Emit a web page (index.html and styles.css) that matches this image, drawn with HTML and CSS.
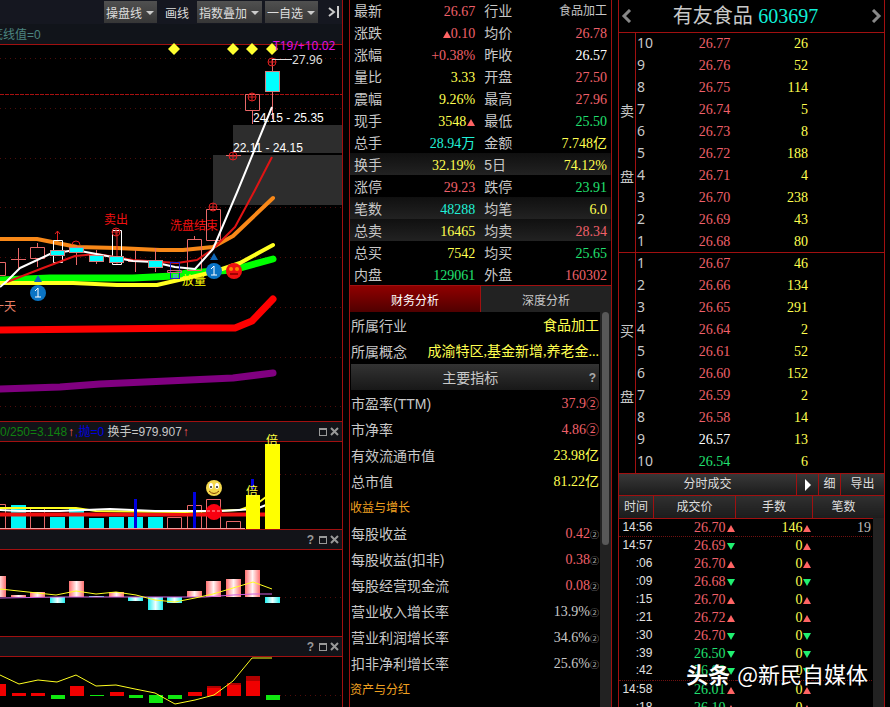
FILE: index.html
```html
<!DOCTYPE html>
<html lang="zh-CN">
<head>
    <meta charset="UTF-8">
    <meta name="viewport" content="width=device-width, initial-scale=1.0">
    <title>有友食品 603697</title>
    <link rel="stylesheet" href="styles.css">
</head>
<body>
    <main class="terminal">
        <!-- Charts -->
        <section class="charts">
            <div class="toolbar">
                <span class="drop"><select aria-label="操盘线"><option>操盘线</option></select></span>
                <button class="plain">画线</button>
                <span class="drop"><select aria-label="指数叠加"><option>指数叠加</option></select></span>
                <span class="drop"><select aria-label="自选"><option>一自选</option></select></span>
                <button class="collapse" aria-label="收起">
                    <svg width="12" height="14" viewBox="0 0 12 14"><path d="M1 3l5 4-5 4M10 1v12" fill="none" stroke="#ccc" stroke-width="2"/></svg>
                </button>
            </div>
            <div class="info">底线值=0</div>
            <svg class="plot" viewBox="0 45 342 376" id="kline">
                <defs>
                    <g id="mark" fill="none" stroke="#e02020"><circle r="4"/><path d="M-4 0h8M0-4v8"/></g>
                    <path id="diamond" d="M0-6l6 6-6 6-6-6z" fill="#ffff30"/>
                    <g id="face"><circle r="8" fill="#f01010"/><circle cx="-3" cy="-2" r="2" fill="#f80"/><circle cx="3" cy="-2" r="2" fill="#f80"/><path d="M-4 3h8" stroke="#a00000" stroke-width="2"/></g>
                    <g id="one"><path d="M0-18l4 7h-8z" fill="#1068b8"/><circle r="8" fill="#0a74c4"/><path d="M-3-2l3-3v9M-3 4h6" fill="none" stroke="#fff" stroke-width="1"/></g>
                </defs>
                <path class="grid" d="M0 58.5h342M0 108.5h342M0 158.5h342M0 207.5h342M0 257.5h342M0 307.5h342M0 357.5h342M0 406.5h342"/>
                <path d="M0 94.5h342" stroke="#a81010" stroke-dasharray="4 1"/>
                <path d="M233 125h109v28h-109zM213 155h129v50h-129z" fill="#2d2d2d"/>

                <polyline class="thick green" points="0,280 50,278 133,278 173,276 187,273 233,270 273,259"/>
                <polyline class="mid yellow" points="0,283 73,283 117,285 157,285 183,279 213,272 240,263 273,245"/>
                <polyline class="mid orange" points="0,239 37,239 57,243 77,247 117,248 160,250 183,250 213,247 233,236 273,198"/>
                <polyline class="thick red" points="0,330 195,328 235,328 252,321 273,299"/>
                <polyline class="thick purple" points="0,389 60,387 100,384 167,381 233,378 273,373"/>

                <g fill="none" stroke="#e86868">
                    <path d="M0 262.500h5.500v13h-5.500M11 259.500h15M18.500 248v20M30.500 247.500h14v11h-14zM37.500 243v4M37.500 259v8"/>
                    <path d="M76.500 245v20M96.500 250v14M128 261.500h15M135.500 250v22M155.500 248v24M187.500 239.500h14v31h-14zM194.500 236v3M206.500 209.500h14v31h-14z"/>
                    <path d="M226 155.500h15M245.500 94.500h14v16h-14zM252.500 111v13M272.500 59v60"/>
                </g>
                <path d="M53.500 240.500h9v22h-9zM112.500 230.500h9v34h-9z" fill="none" stroke="#fff"/>
                <path d="M57.500 231v9M55 234l2.500-3 2.500 3M117 231v33" fill="none" stroke="#e02020"/>
                <polyline class="thin redline" points="7,282 43,268 75,256 97,254 133,260 177,263 197,260 213,249 235,227 255,190 272,157"/>
                <polyline class="thin white" points="0,287 7,281 20,268 50,254 75,250 107,256 133,261 153,262 175,267 195,269 213,249 238,190 272,107"/>
                <g fill="#00ffff" stroke="#d08080">
                    <rect x="50.500" y="250.500" width="14" height="5"/>
                    <rect x="69.500" y="247.500" width="14" height="5"/>
                    <rect x="89.500" y="255.500" width="14" height="6"/>
                    <rect x="109.500" y="256.500" width="14" height="6"/>
                    <rect x="148.500" y="260.500" width="14" height="7"/>
                    <rect x="265.500" y="71.500" width="14" height="20"/>
                </g>
                <rect x="170.500" y="262.500" width="9" height="16" fill="none" stroke="#2020d0" stroke-width="1"/>
                <path d="M167.500 270.500h14v2h-14z" fill="none" stroke="#d06080"/>
                <rect x="173" y="274" width="5" height="4" fill="#40c0a0"/>

                <use href="#mark" x="272" y="62"/><use href="#mark" x="252" y="97"/>
                <use href="#mark" x="233" y="156"/><use href="#mark" x="213" y="207"/>
                <use href="#mark" x="116" y="232"/>
                <path d="M72 245a4 4 0 0 1 8 0" fill="none" stroke="#e02020"/>
                <use href="#diamond" x="174" y="49"/><use href="#diamond" x="233" y="49"/>
                <use href="#diamond" x="252" y="49"/><use href="#diamond" x="272" y="49"/>
                <path d="M272 59.500h20" stroke="#ddd"/>

                <text x="273" y="50" class="tahoma" fill="#e010e0">T19/+10.02</text>
                <text x="292" y="64" class="tahoma" fill="#ddd">27.96</text>
                <text x="253" y="122" fill="#fff">24.15 - 25.35</text>
                <text x="233" y="152" fill="#fff">22.11 - 24.15</text>
                <text x="104" y="224" fill="#f01010">卖出</text>
                <text x="170" y="230" fill="#f01010">洗盘结束</text>
                <text x="182" y="285" fill="#ffff00">放量</text>
                <text x="-8" y="311" fill="#e88068">一天</text>
                <use href="#one" x="38" y="293"/><use href="#one" x="214" y="271"/>
                <use href="#face" x="234" y="271"/>
            </svg>

            <div class="pane-head">
                <span class="vals"><span class="g">0/250=3.148</span><span class="up">↑</span><span class="b">,抛=0</span> <span>换手=979.907</span><span class="up">↑</span></span>
                <button aria-label="最大化"><i class="box"></i></button>
                <button aria-label="关闭"><svg width="9" height="9" viewBox="0 0 9 9"><path d="M1 1l7 7M8 1l-7 7" stroke="#999" stroke-width="2"/></svg></button>
            </div>
            <svg class="plot" viewBox="0 442 342 87">
                <path class="grid" d="M0 474.500h342"/>
                <path d="M11 505h15v23h-15zM50 517h15v11h-15zM69 509h15v19h-15zM89 518h15v10h-15zM109 517h15v11h-15zM128 517h15v11h-15zM148 517h15v11h-15z" fill="#00f4f4"/>
                <path d="M0 504.500h5.500v24M30.500 508.500h14v20h-14zM167.500 517.500h14v11h-14zM187.500 505.500h14v23h-14zM206.500 499.500h14v29h-14zM226.500 521.500h14v7h-14z" fill="none" stroke="#e86868"/>
                <path d="M0 514.500h265" stroke="#f01010" stroke-width="4"/>
                <polyline class="thin yellow" points="0,508 76,508 96,511 185,512 240,510 258,503 266,497"/>
                <polyline class="thin white" points="0,510 20,511 60,511 110,509 155,511 220,511 256,509 266,505"/>
                <path d="M0 528.500h245" stroke="#f0a0a0"/>
                <path d="M135.500 499v29M194.500 492v36M252.500 479v10" stroke="#0000e0" stroke-width="3"/>
                <path d="M246 495h14v34h-14zM265 444h15v85h-15z" fill="#ffff00"/>
                <text x="246" y="496" fill="#ffff40">倍</text>
                <text x="266" y="445" fill="#ffff40">倍</text>
                <circle cx="214" cy="488" r="8" fill="#f4d84c"/>
                <ellipse cx="211" cy="486" rx="2" ry="3" fill="#fff"/><ellipse cx="217" cy="486" rx="2" ry="3" fill="#fff"/>
                <circle cx="211" cy="487" r="1" fill="#222"/><circle cx="217" cy="487" r="1" fill="#222"/>
                <path d="M209 491q5 5 10 0" fill="none" stroke="#804000"/>
                <circle cx="214" cy="512" r="8" fill="#f80010"/>
                <path d="M207 511h14" stroke="#ffb0b0" stroke-dasharray="3 2"/>
            </svg>

            <div class="pane-head">
                <span class="vals"></span>
                <button aria-label="帮助">?</button>
                <button aria-label="最大化"><i class="box"></i></button>
                <button aria-label="关闭"><svg width="9" height="9" viewBox="0 0 9 9"><path d="M1 1l7 7M8 1l-7 7" stroke="#999" stroke-width="2"/></svg></button>
            </div>
            <svg class="plot" viewBox="0 550 342 86">
                <defs>
                    <linearGradient id="pink"><stop offset="0" stop-color="#ff7070"/><stop offset=".5" stop-color="#fff4f4"/><stop offset="1" stop-color="#ff7070"/></linearGradient>
                    <linearGradient id="aqua"><stop offset="0" stop-color="#20f0f0"/><stop offset=".5" stop-color="#f0ffff"/><stop offset="1" stop-color="#20f0f0"/></linearGradient>
                </defs>
                <path class="grid" d="M280 597.500h62"/>
                <g fill="url(#pink)">
                    <rect x="-9" y="576" width="15" height="21"/>
                    <rect x="11" y="595" width="15" height="2"/>
                    <rect x="30" y="592" width="15" height="5"/>
                    <rect x="69" y="581" width="15" height="16"/>
                    <rect x="109" y="592" width="15" height="5"/>
                    <rect x="187" y="591" width="15" height="6"/>
                    <rect x="206" y="581" width="15" height="16"/>
                    <rect x="226" y="579" width="15" height="18"/>
                    <rect x="245" y="570" width="15" height="27"/>
                </g>
                <g fill="url(#aqua)">
                    <rect x="50" y="597" width="15" height="6"/>
                    <rect x="89" y="596" width="15" height="1"/>
                    <rect x="128" y="597" width="15" height="4"/>
                    <rect x="148" y="597" width="15" height="13"/>
                    <rect x="167" y="597" width="15" height="6"/>
                    <rect x="265" y="597" width="15" height="6"/>
                </g>
                <polyline class="hair magenta" points="0,598 60,597 175,597 205,597 233,595 253,594 272,594"/>
                <polyline class="hair yellow" points="0,589 28,592 56,595 76,591 96,594 116,592 136,595 155,600 175,602 195,598 213,594 233,588 253,582 272,589"/>
            </svg>

            <div class="pane-head">
                <span class="vals"></span>
                <button aria-label="帮助">?</button>
                <button aria-label="最大化"><i class="box"></i></button>
                <button aria-label="关闭"><svg width="9" height="9" viewBox="0 0 9 9"><path d="M1 1l7 7M8 1l-7 7" stroke="#999" stroke-width="2"/></svg></button>
            </div>
            <svg class="plot" viewBox="0 657 342 50">
                <path class="grid" d="M280 695.500h62"/>
                <path d="M0 684h6v12h-6zM12 693h14v3h-14zM31 693h14v3h-14zM70 686h14v10h-14zM110 692h14v4h-14zM188 692h14v4h-14zM207 686h14v10h-14zM227 683h14v13h-14zM246 676h14v20h-14z" fill="#f00000"/>
                <path d="M246 676h14v5h-14zM227 683h14v2h-14zM207 686h14v2h-14z" fill="#b00000"/>
                <path d="M51 695h14v4h-14zM90 695h14v1h-14zM129 695h14v3h-14zM149 695h14v8h-14zM168 695h14v4h-14zM266 695h14v5h-14z" fill="#10e810"/>
                <polyline class="hair yellow" points="0,675 19,684 38,680 57,682 76,675 96,686 116,685 135,689 155,693 175,704 195,700 214,695 233,681 252,658 272,658"/>
            </svg>
        </section>

        <!-- Quote details -->
        <section class="quote">
            <table class="stats">
                <colgroup><col class="c1"><col class="c2"><col class="c3"><col class="c4"></colgroup>
                <tr><th>最新</th><td class="r">26.67</td><th>行业</th><td class="small">食品加工</td></tr>
                <tr><th>涨跌</th><td class="r"><i class="tri-up"></i>0.10</td><th>均价</th><td class="r">26.78</td></tr>
                <tr><th>涨幅</th><td class="r">+0.38%</td><th>昨收</th><td class="w">26.57</td></tr>
                <tr><th>量比</th><td>3.33</td><th>开盘</th><td class="r">27.50</td></tr>
                <tr><th>震幅</th><td>9.26%</td><th>最高</th><td class="r">27.96</td></tr>
                <tr><th>现手</th><td>3548<i class="tri-up"></i></td><th>最低</th><td class="g">25.50</td></tr>
                <tr><th>总手</th><td class="c">28.94万</td><th>金额</th><td>7.748亿</td></tr>
                <tr class="alt"><th>换手</th><td>32.19%</td><th>5日</th><td>74.12%</td></tr>
                <tr><th>涨停</th><td class="r">29.23</td><th>跌停</th><td class="g">23.91</td></tr>
                <tr class="alt"><th>笔数</th><td class="c">48288</td><th>均笔</th><td>6.0</td></tr>
                <tr class="alt"><th>总卖</th><td>16465</td><th>均卖</th><td class="r">28.34</td></tr>
                <tr><th>总买</th><td>7542</td><th>均买</th><td class="g">25.65</td></tr>
                <tr><th>内盘</th><td class="g">129061</td><th>外盘</th><td class="r">160302</td></tr>
            </table>
            <div class="tabs">
                <button class="active">财务分析</button>
                <button>深度分析</button>
            </div>
            <div class="finance">
                <dl>
                    <div><dt>所属行业</dt><dd>食品加工</dd></div>
                    <div><dt>所属概念</dt><dd>成渝特区,基金新增,养老金...</dd></div>
                    <div class="title"><dt>主要指标</dt><dd>?</dd></div>
                    <div><dt>市盈率(TTM)</dt><dd class="r">37.9<span class="q">②</span></dd></div>
                    <div><dt>市净率</dt><dd class="r">4.86<span class="q">②</span></dd></div>
                    <div><dt>有效流通市值</dt><dd>23.98亿</dd></div>
                    <div><dt>总市值</dt><dd>81.22亿</dd></div>
                    <div class="sub"><dt>收益与增长</dt></div>
                    <div><dt>每股收益</dt><dd class="r">0.42<span class="qs">②</span></dd></div>
                    <div><dt>每股收益(扣非)</dt><dd class="r">0.38<span class="qs">②</span></dd></div>
                    <div><dt>每股经营现金流</dt><dd class="r">0.08<span class="qs">②</span></dd></div>
                    <div><dt>营业收入增长率</dt><dd class="n">13.9%<span class="qs">②</span></dd></div>
                    <div><dt>营业利润增长率</dt><dd class="n">34.6%<span class="qs">②</span></dd></div>
                    <div><dt>扣非净利增长率</dt><dd class="n">25.6%<span class="qs">②</span></dd></div>
                    <div class="sub"><dt>资产与分红</dt></div>
                </dl>
                <div class="scroll"><i></i></div>
            </div>
        </section>

        <!-- Order book and trades -->
        <section class="book">
            <header>
                <button aria-label="上一只"><svg width="12" height="14" viewBox="0 0 12 14"><path d="M9 1L3 7l6 6" fill="none" stroke="#888" stroke-width="3"/></svg></button>
                <h1>有友食品 <span>603697</span></h1>
                <button aria-label="下一只"><svg width="12" height="14" viewBox="0 0 12 14"><path d="M3 1l6 6-6 6" fill="none" stroke="#888" stroke-width="3"/></svg></button>
            </header>
            <div class="side">
                <div class="name"><span>卖</span><span>盘</span></div>
                <table id="sell"></table>
            </div>
            <div class="side">
                <div class="name"><span>买</span><span>盘</span></div>
                <table id="buy"></table>
            </div>
            <div class="bar">
                <span class="bar-title">分时成交</span>
                <button class="play" aria-label="展开"><i></i></button>
                <button class="fine">细</button>
                <button class="export">导出</button>
            </div>
            <div class="trades">
                <table>
                    <colgroup><col class="t1"><col class="t2"><col class="t3"><col class="t4"></colgroup>
                    <thead><tr><th>时间</th><th>成交价</th><th>手数</th><th>笔数</th></tr></thead>
                    <tbody id="trades"></tbody>
                </table>
                <div class="scroll"></div>
            </div>
        </section>
    </main>
    <div class="watermark"><b>头条</b> @新民自媒体</div>

    <script>
        const sell = [
            [10, "26.77", 26], [9, "26.76", 52], [8, "26.75", 114], [7, "26.74", 5], [6, "26.73", 8],
            [5, "26.72", 188], [4, "26.71", 4], [3, "26.70", 238], [2, "26.69", 43], [1, "26.68", 80]
        ];
        const buy = [
            [1, "26.67", 46], [2, "26.66", 134], [3, "26.65", 291], [4, "26.64", 2], [5, "26.61", 52],
            [6, "26.60", 152], [7, "26.59", 2], [8, "26.58", 14], [9, "26.57", 13], [10, "26.54", 6]
        ];
        // time, price, price direction, lots, lots direction, count
        const trades = [
            ["14:56", "26.70", "up", 146, "up", 19], ["14:57", "26.69", "down", 0, "up", ""],
            [":06", "26.70", "up", 0, "up", ""], [":09", "26.68", "down", 0, "down", ""],
            [":15", "26.70", "up", 0, "up", ""], [":21", "26.72", "up", 0, "up", ""],
            [":30", "26.70", "down", 0, "down", ""], [":39", "26.50", "down", 0, "down", ""],
            [":42", "26.00", "down", 0, "down", ""], ["14:58", "26.01", "up", 0, "up", ""],
            [":18", "26.10", "up", 0, "up", ""]
        ];
        const lastClose = 26.57;

        function priceClass(price) {
            if (Number(price) === lastClose) return "w";
            return Number(price) > lastClose ? "r" : "g";
        }

        function fillBook(id, rows) {
            document.getElementById(id).innerHTML = rows.map(([n, price, lots]) =>
                `<tr><th>${n}</th><td class="${priceClass(price)}">${price}</td><td class="lots">${lots}</td></tr>`
            ).join("");
        }

        fillBook("sell", sell);
        fillBook("buy", buy);

        document.getElementById("trades").innerHTML = trades.map((t, i) => {
            const next = trades[i + 1];
            // dotted rule under 14:56 and before 14:58
            const minuteEnd = next && next[0].length === 5 ? "minute" : "";
            return `<tr class="${minuteEnd}"><td class="time">${t[0]}</td>` +
                `<td class="${priceClass(t[1])}">${t[1]}<i class="tri-${t[2]}"></i></td>` +
                `<td>${t[3]}<i class="tri-${t[4]}"></i></td><td class="count">${t[5]}</td></tr>`;
        }).join("");
    </script>
</body>
</html>
```
FILE: styles.css
```css
* {
    box-sizing: border-box;
}
body {
    margin: 0;
    height: 100vh;
    overflow: hidden;
    position: relative;
    background: #000;
    color: #c8c8c8;
    font-family: "Liberation Sans", "Noto Sans CJK SC", sans-serif;
    font-size: 12px;
}
button, select {
    font: inherit;
    color: inherit;
    background: none;
    border: none;
    border-radius: 0;
    padding: 0;
    margin: 0;
    cursor: pointer;
}
table {
    width: 100%;
    border-collapse: collapse;
    table-layout: fixed;
}
th, td {
    padding: 0;
    font-weight: normal;
}
svg {
    display: block;
}
.terminal {
    display: grid;
    grid-template-columns: 343fr 263fr 267fr;
    gap: 6px;
    padding-right: 5px;
    height: 100%;
    align-items: stretch;
}
.terminal section {
    min-width: 0;
}

/* price colours */
.r { color: #f0606a !important; }
.g { color: #20e070 !important; }
.w { color: #fff !important; }
.c { color: #20f0d8 !important; }
.n { color: #c8c8c8 !important; }

.tri-up, .tri-down {
    display: inline-block;
    margin-left: 1px;
    border-left: 4px solid transparent;
    border-right: 4px solid transparent;
}
.tri-up {
    border-bottom: 7px solid #ff6464;
}
.tri-down {
    border-top: 7px solid #20f070;
}

/* charts */
.charts {
    border-right: 1px solid #a01010;
    overflow: hidden;
}
.toolbar {
    display: flex;
    justify-content: flex-end;
    align-items: center;
    height: 24px;
    gap: 3px;
    padding-right: 2px;
    background: #151720;
    color: #ddd;
}
.drop {
    position: relative;
    background: linear-gradient(#505050, #363636);
}
.drop select {
    display: block;
    appearance: none;
    height: 22px;
    padding: 3px 14px 0 2px;
}
.drop::after {
    content: "";
    position: absolute;
    right: 3px;
    top: 10px;
    border: 4px solid transparent;
    border-top-color: #ccc;
    border-bottom: none;
    pointer-events: none;
}
.plain {
    padding: 0 5px;
}
.collapse {
    margin-left: 7px;
}
.info {
    height: 21px;
    line-height: 22px;
    text-indent: -9px;
    background: #11141a;
    color: #4c8580;
    border-bottom: 1px solid #a01010;
}
.plot {
    width: 100%;
    height: auto;
    overflow: visible;
    font-size: 12px;
}
.tahoma {
    font-family: "Noto Sans", sans-serif;
}
.grid {
    stroke: #500c0c;
    stroke-dasharray: 1 4;
}
polyline {
    fill: none;
    stroke-linejoin: round;
}
.hair { stroke-width: 1; }
.thin { stroke-width: 2; }
.mid { stroke-width: 4; stroke-linecap: round; }
.thick { stroke-width: 7; stroke-linecap: round; }
.green { stroke: #00ff00; }
.yellow { stroke: #ffff20; }
.orange { stroke: #f88818; }
.red { stroke: #ff0000; }
.redline { stroke: #e01414; }
.purple { stroke: #800080; }
.white { stroke: #fff; }
.magenta { stroke: #d060e0; }
.pane-head {
    display: flex;
    align-items: center;
    gap: 3px;
    height: 21px;
    padding-right: 3px;
    background: #121318;
    border-top: 1px solid #a01010;
    border-bottom: 1px solid #a01010;
}
.pane-head button {
    display: flex;
    align-items: center;
    justify-content: center;
    width: 9px;
    height: 18px;
    color: #999;
    font-weight: bold;
}
.vals {
    flex: 1;
    height: 19px;
    line-height: 21px;
    white-space: nowrap;
}
.vals .g { color: #108010 !important; }
.vals .b { color: #0000e0; }
.vals .up {
    display: inline-block;
    width: 8px;
    text-align: center;
    color: #ff6060;
    font-weight: bold;
}
.box {
    width: 8px;
    height: 8px;
    border: 1px solid #999;
    border-top-width: 2px;
}

/* quote details */
.quote {
    border-left: 1px solid #a01010;
    border-right: 1px solid #a01010;
    overflow: hidden;
}
.stats {
    margin-top: -1px;
    font-size: 14px;
}
.c1 { width: 18%; }
.c2 { width: 30%; }
.c3 { width: 20%; }
.c4 { width: 32%; }
.stats tr {
    height: 22px;
}
.stats th, .stats td {
    padding-top: 3px;
    line-height: 19px;
}
.stats th {
    text-align: left;
    padding-left: 4px;
}
.stats td + th {
    padding-left: 9px;
}
.stats td {
    text-align: right;
    color: #ffff50;
    font-family: "Liberation Serif", "Noto Sans CJK SC", serif;
}
.stats td:last-child {
    padding-right: 4px;
}
.stats .small {
    font-size: 12px;
    color: #c8c8c8;
}
.stats .alt {
    background: linear-gradient(#101010, #222);
}
.tabs {
    display: flex;
    height: 27px;
    border-top: 1px solid #a01010;
}
.tabs button {
    flex: 1;
    background: #222;
}
.tabs .active {
    background: linear-gradient(#900000, #500000);
    color: #fff;
    border-right: 1px solid #a01010;
}
.finance {
    display: flex;
    min-height: 100%;
}
.finance dl {
    flex: 1;
    margin: 0;
    font-size: 14px;
}
.finance dl div {
    display: flex;
    justify-content: space-between;
    height: 26px;
    line-height: 26px;
    padding: 1px 1px 0;
    white-space: nowrap;
}
.finance dd {
    margin: 0;
    color: #ffff50;
    font-family: "Liberation Serif", "Noto Sans CJK SC", serif;
}
.finance .title {
    margin: 0 1px;
    background: linear-gradient(#333, #181818);
}
.finance .title dt {
    flex: 1;
    text-align: center;
}
.finance .title dd {
    color: #aaa;
    font: bold 12px/26px "Liberation Sans", sans-serif;
    padding-right: 2px;
}
.finance .sub {
    font-size: 12px;
    padding: 1px 0 0;
    color: #f0a020;
}
.q {
    font-size: 13px;
    font-family: "Noto Sans CJK SC", sans-serif;
    line-height: 16px;
}
.qs {
    font-size: 9px;
    color: #aaa;
    font-family: "Noto Sans CJK SC", sans-serif;
    line-height: 16px;
}
.scroll {
    width: 11px;
    padding: 0 2px;
    background: #222;
}
.scroll i {
    display: block;
    height: 233px;
    border-radius: 4px;
    background: #585858;
}

/* order book */
.book {
    border-left: 1px solid #a01010;
    border-right: 1px solid #a01010;
    overflow: hidden;
}
.book header {
    display: flex;
    justify-content: space-between;
    align-items: center;
    height: 33px;
    padding: 0 2px;
    border-bottom: 1px solid #a01010;
}
.book h1 {
    margin: 0;
    padding-right: 12px;
    font-size: 20px;
    font-weight: normal;
    line-height: 32px;
}
.book h1 span {
    color: #10f0d8;
    font-family: "Liberation Serif", serif;
}
.side {
    display: flex;
    height: 220px;
    font-size: 14px;
}
.side:nth-of-type(1) {
    border-bottom: 1px solid #a01010;
}
.name {
    display: flex;
    flex-direction: column;
    align-items: center;
    gap: 44px;
    width: 17px;
    padding-top: 67px;
    line-height: 22px;
    border-right: 1px solid #a01010;
}
.side table {
    flex: 1;
    width: auto;
    height: 220px;
}
.side tr {
    height: 22px;
}
.side th {
    width: 18%;
    padding: 0 0 2px 1px;
    text-align: left;
    font-family: "Noto Sans", sans-serif;
    font-size: 14px;
    line-height: 20px;
}
.side td {
    width: 20%;
    text-align: right;
    font-family: "Liberation Serif", serif;
}
.side .lots {
    width: 62%;
    padding-right: 76px;
    color: #ffff50;
}
.bar {
    display: flex;
    height: 23px;
    color: #ddd;
    background: linear-gradient(#383838, #1c1c1c);
    border-top: 1px solid #a01010;
    border-bottom: 1px solid #a01010;
    line-height: 21px;
}
.bar-title {
    flex: 1;
    text-align: center;
}
.bar button {
    border-left: 1px solid #a01010;
}
.play, .fine {
    width: 22px;
}
.export {
    width: 44px;
}
.play i {
    display: inline-block;
    border: 6px solid transparent;
    border-left-color: #fff;
    border-right: none;
    vertical-align: middle;
}
.trades {
    position: relative;
}
.trades th {
    height: 22px;
    line-height: 20px;
    color: #ddd;
    background: linear-gradient(#303030, #1c1c1c);
    border-right: 1px solid #a01010;
    border-bottom: 1px solid #a01010;
}
.trades th:last-child {
    border-right: none;
    padding-right: 10px;
}
.t1 { width: 13%; }
.t2 { width: 31%; }
.t3 { width: 29%; }
.t4 { width: 27%; }
.trades td {
    height: 18px;
    line-height: 17px;
    padding-right: 1px;
    text-align: right;
    color: #ffff50;
    font-family: "Liberation Serif", serif;
    font-size: 14px;
}
.trades .time {
    color: #e0e0e0;
    font-family: "Liberation Sans", sans-serif;
    font-size: 12px;
}
.trades .count {
    padding-right: 13px;
    color: #bbb;
}
.trades .minute td {
    border-bottom: 1px dotted #701010;
}
.trades .scroll {
    position: absolute;
    top: 22px;
    right: 0;
    bottom: 0;
}

.watermark {
    position: absolute;
    right: 22px;
    bottom: 18px;
    color: #fff;
    font-size: 22px;
    line-height: 32px;
    text-shadow: 1px 1px 2px #000;
    font-family: "Noto Sans CJK SC", sans-serif;
}
.watermark b {
    margin-right: 2px;
}
```
